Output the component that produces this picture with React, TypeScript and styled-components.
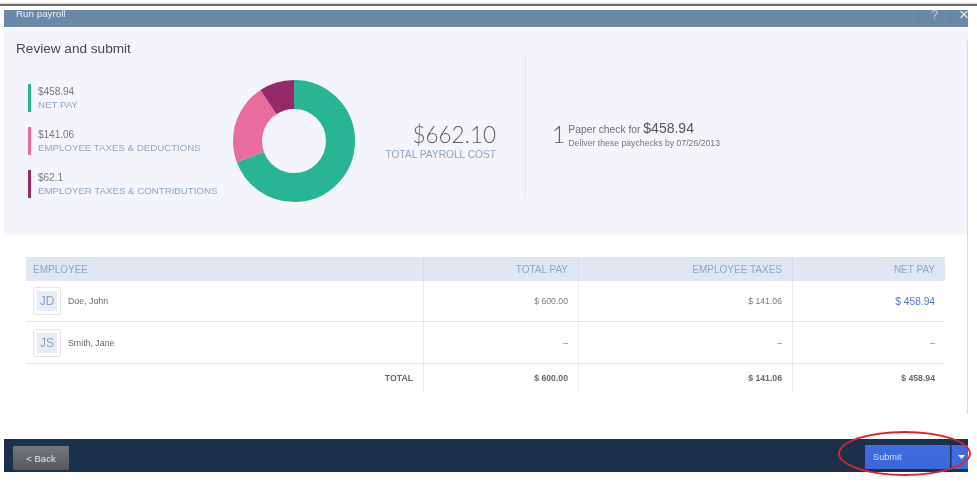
import React from 'react';
import styled, { createGlobalStyle } from 'styled-components';

const GlobalStyle = createGlobalStyle`
  html, body {
    margin: 0;
    background: #fff;
    font-family: 'Liberation Sans', Arial, sans-serif;
  }
`;

const legend = [
  { amount: '$458.94', label: 'NET PAY', color: '#29b594' },
  { amount: '$141.06', label: 'EMPLOYEE TAXES & DEDUCTIONS', color: '#e96c9e' },
  { amount: '$62.1', label: 'EMPLOYER TAXES & CONTRIBUTIONS', color: '#952a69' },
];

const rows = [
  { initials: 'JD', name: 'Doe, John', total: '$ 600.00', taxes: '$ 141.06', net: '$ 458.94', link: true },
  { initials: 'JS', name: 'Smith, Jane', total: '–', taxes: '–', net: '–', link: false },
];

function Donut() {
  const r = 46.5;
  const circ = 2 * Math.PI * r;
  const slices = [
    { part: 0.693, color: '#29b594' },
    { part: 0.213, color: '#e96c9e' },
    { part: 0.094, color: '#952a69' },
  ];
  let used = 0;
  return (
    <DonutSvg viewBox="0 0 122 122">
      <g transform="rotate(-90 61 61)">
        {slices.map((s) => {
          const el = (
            <circle
              key={s.color}
              cx="61"
              cy="61"
              r={r}
              fill="none"
              stroke={s.color}
              strokeWidth="29"
              strokeDasharray={`${s.part * circ} ${circ}`}
              strokeDashoffset={-used * circ}
            />
          );
          used += s.part;
          return el;
        })}
      </g>
    </DonutSvg>
  );
}

export default function App() {
  return (
    <Page>
      <GlobalStyle />
      <TopRule />
      <Modal>
        <TitleBar>
          <TitleText>Run payroll</TitleText>
          <HelpButton>?</HelpButton>
          <CloseButton>×</CloseButton>
        </TitleBar>
        <Summary>
          <Heading>Review and submit</Heading>
          <SummaryBody>
            <Legend>
              {legend.map((item) => (
                <LegendItem key={item.label} $color={item.color}>
                  <LegendAmount>{item.amount}</LegendAmount>
                  <LegendLabel>{item.label}</LegendLabel>
                </LegendItem>
              ))}
            </Legend>
            <Donut />
            <Total>
              <TotalAmount>$662.10</TotalAmount>
              <TotalLabel>TOTAL PAYROLL COST</TotalLabel>
            </Total>
            <Check>
              <CheckCount>1</CheckCount>
              <div>
                <CheckLine>
                  Paper check for <CheckAmount>$458.94</CheckAmount>
                </CheckLine>
                <CheckNote>Deliver these paychecks by 07/26/2013</CheckNote>
              </div>
            </Check>
          </SummaryBody>
        </Summary>
        <TableArea>
          <Table>
            <HeadCell $left>EMPLOYEE</HeadCell>
            <HeadCell>TOTAL PAY</HeadCell>
            <HeadCell>EMPLOYEE TAXES</HeadCell>
            <HeadCell $last>NET PAY</HeadCell>
            {rows.map((row) => (
              <React.Fragment key={row.name}>
                <Cell $left>
                  <Avatar>
                    <AvatarInner>{row.initials}</AvatarInner>
                  </Avatar>
                  <Name>{row.name}</Name>
                </Cell>
                <Cell>{row.total}</Cell>
                <Cell>{row.taxes}</Cell>
                <Cell $last $link={row.link}>{row.net}</Cell>
              </React.Fragment>
            ))}
            <TotalCell>TOTAL</TotalCell>
            <TotalCell>$ 600.00</TotalCell>
            <TotalCell>$ 141.06</TotalCell>
            <TotalCell $last>$ 458.94</TotalCell>
          </Table>
        </TableArea>
        <Footer>
          <BackButton>&lt; Back</BackButton>
          <SubmitGroup>
            <SubmitButton>Submit</SubmitButton>
            <CaretButton>
              <svg width="7" height="4" viewBox="0 0 7 4">
                <path d="M0 0h7L3.5 4z" fill="#fff" />
              </svg>
            </CaretButton>
          </SubmitGroup>
        </Footer>
      </Modal>
      <Annotation />
    </Page>
  );
}

const Page = styled.div`
  position: relative;
  width: 977px;
  height: 489px;
  overflow: hidden;
  background: #fff;
  filter: blur(0.6px);
`;

const TopRule = styled.div`
  margin-top: 3px;
  height: 2px;
  background: #6d7075;
  border-top: 1px solid #d4d4d4;
`;

const Modal = styled.div`
  position: relative;
  width: 964px;
  margin: 4px 0 0 4px;
  &::after {
    content: '';
    position: absolute;
    top: 31px;
    bottom: 58px;
    right: 0;
    width: 1px;
    background: #d8dadf;
  }
`;

const TitleBar = styled.div`
  display: flex;
  height: 17px;
  overflow: hidden;
  padding-left: 12px;
  background: #6b88a6;
  color: #e6ecf3;
`;

const TitleText = styled.div`
  flex: 1;
  margin-top: -2px;
  font-size: 9.8px;
  line-height: 11px;
`;

const HelpButton = styled.div`
  width: 31px;
  border-left: 1px solid #64809d;
  text-align: center;
  font-size: 13px;
  line-height: 9px;
  color: #b9c7d6;
`;

const CloseButton = styled.div`
  width: 18px;
  box-sizing: border-box;
  padding-left: 8px;
  border-left: 1px solid #64809d;
  font-size: 17px;
  line-height: 9px;
`;

const Summary = styled.div`
  height: 207px;
  margin-top: 1px;
  padding: 13px 12px 0;
  box-sizing: border-box;
  background: #f3f5fa;
`;

const Heading = styled.h1`
  margin: 0;
  font-size: 13.6px;
  font-weight: 400;
  line-height: 15px;
  color: #45474b;
`;

const SummaryBody = styled.div`
  display: flex;
  align-items: flex-start;
  height: 142px;
`;

const Legend = styled.div`
  display: flex;
  flex-direction: column;
  gap: 15px;
  width: 217px;
  margin-top: 28px;
  padding-left: 12px;
  box-sizing: border-box;
  flex: none;
`;

const LegendItem = styled.div<{ $color: string }>`
  display: flex;
  flex-direction: column;
  justify-content: center;
  gap: 2px;
  height: 28px;
  padding-left: 7px;
  border-left: 3px solid ${(p) => p.$color};
`;

const LegendAmount = styled.div`
  font-size: 10px;
  line-height: 11px;
  color: #77797d;
`;

const LegendLabel = styled.div`
  font-size: 9.7px;
  line-height: 11px;
  white-space: nowrap;
  color: #8ea5c2;
`;

const DonutSvg = styled.svg`
  flex: none;
  width: 122px;
  height: 122px;
  margin-top: 24px;
`;

const Total = styled.div`
  width: 141px;
  flex: none;
  margin-top: 65px;
  text-align: right;
`;

const TotalAmount = styled.div`
  font-family: Lato, 'Liberation Sans', sans-serif;
  font-size: 22.5px;
  font-weight: 300;
  line-height: 28px;
  color: #5f6165;
`;

const TotalLabel = styled.div`
  font-size: 10.2px;
  line-height: 12px;
  white-space: nowrap;
  color: #8ea5c2;
`;

const Check = styled.div`
  display: flex;
  align-items: center;
  gap: 3px;
  align-self: stretch;
  box-sizing: border-box;
  margin-left: 29px;
  padding: 14px 0 0 26px;
  border-left: 1px solid #dfe4ec;
`;

const CheckCount = styled.div`
  font-family: Lato, 'Liberation Sans', sans-serif;
  font-size: 23px;
  font-weight: 300;
  color: #55575b;
`;

const CheckLine = styled.div`
  font-size: 10.3px;
  line-height: 14px;
  color: #6c6e72;
`;

const CheckAmount = styled.span`
  font-size: 14px;
  color: #55575b;
`;

const CheckNote = styled.div`
  margin-top: 2px;
  font-size: 8.7px;
  line-height: 9px;
  white-space: nowrap;
  color: #75777b;
`;

const TableArea = styled.div`
  padding: 22px 22px 0;
`;

const Table = styled.div`
  display: grid;
  grid-template-columns: 398px 155px 214px 152px;
  grid-template-rows: 24px 41px 42px 28px;
`;

const HeadCell = styled.div<{ $left?: boolean; $last?: boolean }>`
  display: flex;
  align-items: center;
  justify-content: ${(p) => (p.$left ? 'flex-start' : 'flex-end')};
  padding: 0 10px 0 ${(p) => (p.$left ? 7 : 0)}px;
  background: #e1e7f2;
  border-right: ${(p) => (p.$last ? 'none' : '1px solid #d3ddec')};
  font-size: 10px;
  color: #8ea5c2;
`;

const Cell = styled.div<{ $left?: boolean; $last?: boolean; $link?: boolean }>`
  display: flex;
  align-items: center;
  justify-content: ${(p) => (p.$left ? 'flex-start' : 'flex-end')};
  padding: 0 10px 0 ${(p) => (p.$left ? 7 : 0)}px;
  border-right: ${(p) => (p.$last ? 'none' : '1px solid #eceef2')};
  border-bottom: 1px solid #e3e4e6;
  font-size: ${(p) => (p.$link ? 10.2 : 8.7)}px;
  color: ${(p) => (p.$link ? '#5577d2' : '#77797d')};
`;

const Avatar = styled.div`
  flex: none;
  width: 28px;
  height: 28px;
  padding: 3px;
  box-sizing: border-box;
  border: 1px solid #e3e4e6;
  border-radius: 2px;
`;

const AvatarInner = styled.div`
  display: flex;
  align-items: center;
  justify-content: center;
  height: 100%;
  background: #e6edf6;
  font-size: 12px;
  color: #8ea5c2;
`;

const Name = styled.div`
  margin-left: 7px;
  font-size: 8.8px;
  color: #66686c;
`;

const TotalCell = styled.div<{ $last?: boolean }>`
  display: flex;
  align-items: center;
  justify-content: flex-end;
  padding: 0 10px 0 0;
  border-right: ${(p) => (p.$last ? 'none' : '1px solid #eceef2')};
  font-size: 8.7px;
  font-weight: 700;
  color: #66686c;
`;

const Footer = styled.div`
  display: flex;
  align-items: center;
  justify-content: space-between;
  height: 33px;
  margin-top: 47px;
  padding: 1px 0 0 9px;
  box-sizing: border-box;
  background: #1b304a;
`;

const BackButton = styled.button`
  width: 56px;
  height: 24px;
  margin-top: 4px;
  padding: 0;
  border: none;
  border-radius: 1px;
  background: linear-gradient(#74787d, #55595e);
  color: #e8e9ea;
  font: 9.5px 'Liberation Sans', Arial, sans-serif;
`;

const SubmitGroup = styled.div`
  display: flex;
  gap: 1px;
  height: 24px;
  margin-top: 2px;
`;

const SubmitButton = styled.button`
  width: 85px;
  padding: 0 0 0 8px;
  border: none;
  border-radius: 1px 0 0 1px;
  background: linear-gradient(#3f6ee2, #3a66d8);
  color: #d4def7;
  text-align: left;
  font: 9.2px 'Liberation Sans', Arial, sans-serif;
`;

const CaretButton = styled.button`
  display: flex;
  align-items: center;
  justify-content: center;
  width: 17px;
  padding: 0 0 0 2px;
  border: none;
  border-left: 1px solid #2f4f9c;
  background: #3d6be0;
`;

/* red marker somebody drew over the screenshot */
const Annotation = styled.div`
  position: absolute;
  left: 838px;
  top: 431px;
  width: 133px;
  height: 45px;
  box-sizing: border-box;
  border: 2px solid #e0232a;
  border-radius: 50%;
`;
